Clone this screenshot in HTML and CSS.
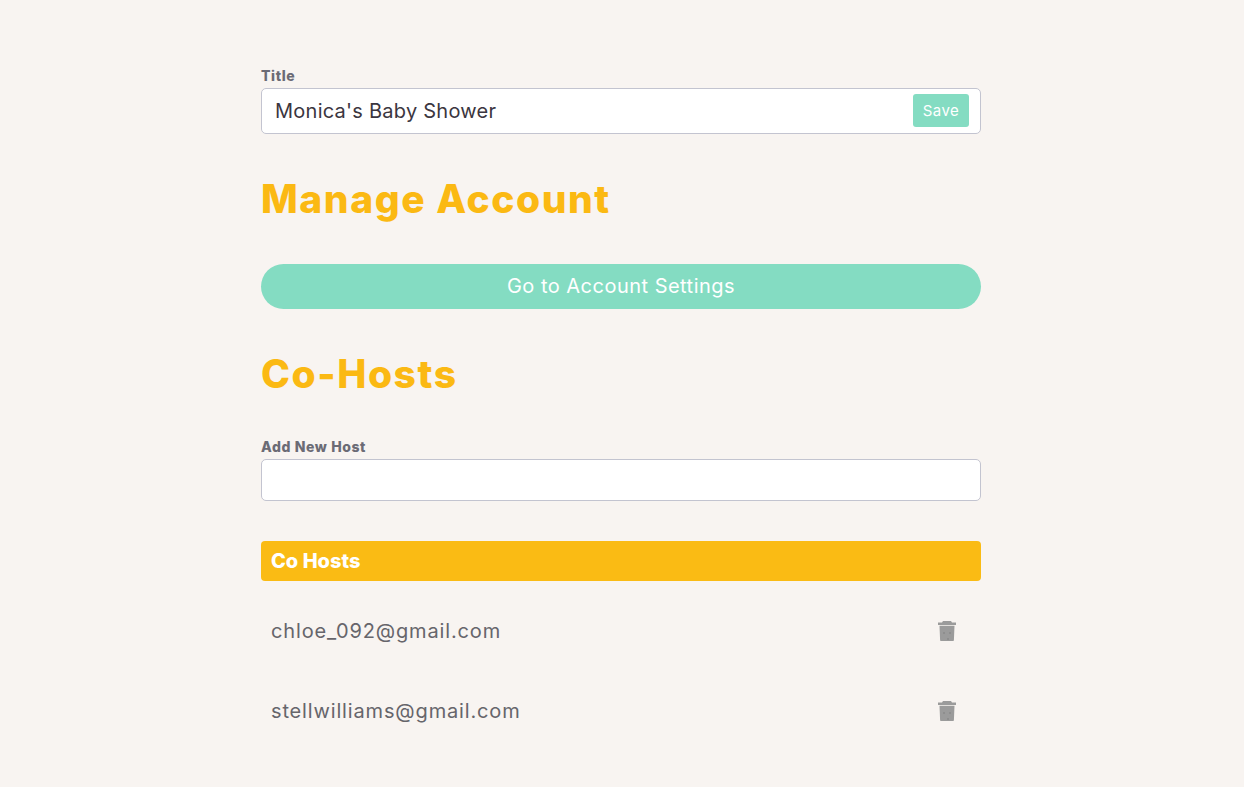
FILE: index.html
```html
<!DOCTYPE html>
<html>
<head>
  <title>Manage Event</title>
  <link rel="stylesheet" href="styles.css">
</head>
<body>
  <main class="settings">
    <label class="field-label" for="titleInput">Title</label>
    <div class="title-box">
      <input id="titleInput" class="title-input" type="text" value="Monica's Baby Shower">
      <button class="save-button">Save</button>
    </div>

    <h1 class="section-title account-title">Manage Account</h1>
    <button class="account-button">Go to Account Settings</button>

    <h1 class="section-title hosts-title">Co-Hosts</h1>
    <label class="field-label" for="hostInput">Add New Host</label>
    <input id="hostInput" class="host-input" type="text">

    <div class="hosts-header">Co Hosts</div>
    <div class="host-list">
      <div class="host-row">
        <span>chloe_092@gmail.com</span>
        <svg class="trash" viewBox="0 0 18 20">
          <path d="M5 0h8l1 1.500h4V4H0V1.500h4zM1.500 4.700h15l-.6 14.500a.8.8 0 0 1-.8.8H2.900a.8.8 0 0 1-.8-.8z"/>
          <circle class="trash-dot" cx="6" cy="12" r=".7"/>
          <circle class="trash-dot" cx="12" cy="12" r=".7"/>
          <circle class="trash-dot" cx="10" cy="18" r=".7"/>
        </svg>
      </div>
      <div class="host-row">
        <span>stellwilliams@gmail.com</span>
        <svg class="trash" viewBox="0 0 18 20">
          <path d="M5 0h8l1 1.500h4V4H0V1.500h4zM1.500 4.700h15l-.6 14.500a.8.8 0 0 1-.8.8H2.900a.8.8 0 0 1-.8-.8z"/>
          <circle class="trash-dot" cx="6" cy="12" r=".7"/>
          <circle class="trash-dot" cx="12" cy="12" r=".7"/>
          <circle class="trash-dot" cx="10" cy="18" r=".7"/>
        </svg>
      </div>
    </div>
  </main>
</body>
</html>
```

FILE: styles.css
```css
html, body {
  margin: 0;
  padding: 0;
}
body {
  font-family: Inter, "Open Sans", sans-serif;
  background-color: #f8f4f1;
  height: 787px;
  overflow: hidden;
}
.settings {
  width: 720px;
  margin-left: 261px;
  padding-top: 67px;
}
.field-label {
  display: block;
  font-size: 14px;
  font-weight: 800;
  line-height: 17px;
  letter-spacing: 0.6px;
  color: #6b6b75;
  margin-bottom: 4px;
}
.title-box {
  display: flex;
  align-items: center;
  box-sizing: border-box;
  height: 46px;
  padding: 0 11px 0 13px;
  background-color: #fff;
  border: 1px solid #c3c4d0;
  border-radius: 5px;
}
.title-input {
  flex: 1;
  border: 0;
  outline: 0;
  padding: 0;
  font-family: inherit;
  font-size: 20px;
  letter-spacing: 0.25px;
  color: #3b3640;
}
.save-button {
  width: 56px;
  height: 33px;
  margin-bottom: 1px;
  padding: 0;
  border: 0;
  border-radius: 3px;
  background-color: #84dcc2;
  color: #fff;
  font-family: inherit;
  font-size: 15px;
  letter-spacing: 0.4px;
}
.section-title {
  margin: 0;
  color: #fbb913;
  font-size: 39px;
  font-weight: 800;
  line-height: 48px;
  letter-spacing: 1.55px;
}
.account-title {
  margin-top: 41px;
}
.account-button {
  display: block;
  width: 100%;
  height: 45px;
  margin-top: 41px;
  padding: 0 0 1px;
  border: 0;
  border-radius: 23px;
  background-color: #84dcc2;
  color: #fff;
  font-family: inherit;
  font-size: 20px;
  letter-spacing: 0.48px;
}
.hosts-title {
  margin-top: 41px;
  margin-bottom: 40px;
}
.host-input {
  display: block;
  box-sizing: border-box;
  width: 100%;
  height: 42px;
  background-color: #fff;
  border: 1px solid #c3c4d0;
  border-radius: 5px;
  outline: 0;
}
.hosts-header {
  height: 40px;
  margin-top: 40px;
  padding-left: 10px;
  background-color: #fabb14;
  border-radius: 4px;
  color: #fff;
  font-size: 20px;
  font-weight: 800;
  line-height: 40px;
}
.host-list {
  padding-top: 10px;
}
.host-row {
  display: flex;
  align-items: center;
  justify-content: space-between;
  height: 80px;
  padding: 0 25px 0 10px;
  color: #66656b;
  font-size: 20px;
  letter-spacing: 0.85px;
}
.trash {
  width: 18px;
  height: 20px;
  fill: #9b9b9b;
}
.trash-dot {
  fill: #777;
}
```
